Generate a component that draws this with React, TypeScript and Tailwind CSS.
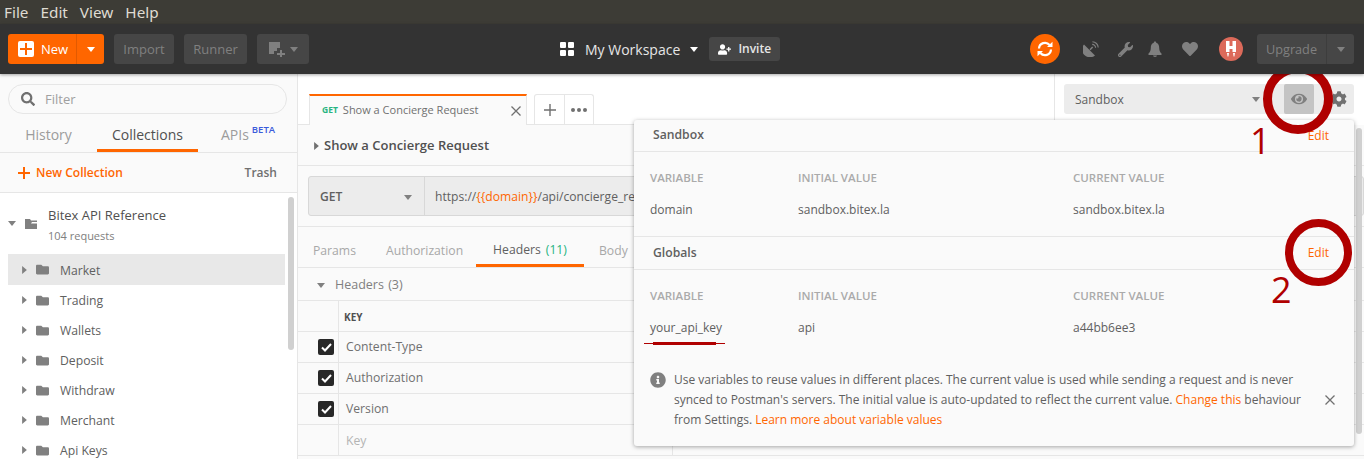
import { FaCog, FaEye, FaFolder, FaHeart, FaInfoCircle, FaSearch, FaUserPlus, FaWrench } from 'react-icons/fa';

const folders = ['Market', 'Trading', 'Wallets', 'Deposit', 'Withdraw', 'Merchant', 'Api Keys'];
const headerRows = ['Content-Type', 'Authorization', 'Version'];

function Caret({ dir = 'down', className = '' }: { dir?: 'down' | 'right'; className?: string }) {
  return (
    <svg width={dir === 'down' ? 10 : 6} height={dir === 'down' ? 6 : 10} viewBox={dir === 'down' ? '0 0 10 6' : '0 0 6 10'} className={`fill-current shrink-0 ${className}`}>
      <path d={dir === 'down' ? 'M0 0h10L5 6z' : 'M0 0l6 5-6 5z'} />
    </svg>
  );
}

function Cross({ className = '' }: { className?: string }) {
  return (
    <svg width="10" height="10" viewBox="0 0 10 10" className={`stroke-current shrink-0 ${className}`} strokeWidth="1.3">
      <path d="M0.5 0.5l9 9M9.5 0.5l-9 9" />
    </svg>
  );
}

function SyncIcon() {
  return (
    <svg width="18" height="18" viewBox="0 0 18 18" fill="none" stroke="white" strokeWidth="2.2">
      <path d="M3 8.5A6 6 0 0 1 13.6 5" />
      <path d="M15 9.5A6 6 0 0 1 4.4 13" />
      <path d="M11 7h5.5V1.8z" fill="white" stroke="none" />
      <path d="M7 11H1.5v5.2z" fill="white" stroke="none" />
    </svg>
  );
}

function DishIcon() {
  return (
    <svg width="16" height="16" viewBox="0 0 16 16" className="fill-current">
      <path d="M1 3.4A7.8 7.8 0 0 0 12 14.4z" />
      <path d="M6.5 8.2L9.2 5.5l1 1L7.5 9.2z" />
      <path d="M9.2 3.4a3.4 3.4 0 0 1 3.4 3.4" fill="none" stroke="currentColor" strokeWidth="1.1" />
      <path d="M9.4 0.8a5.8 5.8 0 0 1 5.8 5.8" fill="none" stroke="currentColor" strokeWidth="1.1" />
    </svg>
  );
}

function BellIcon({ className = '' }: { className?: string }) {
  return (
    <svg width="16" height="16" viewBox="0 0 16 16" className={`fill-current ${className}`}>
      <path d="M8 0.5c.8 0 1.2.6 1.2 1.2C11.5 2.5 12.2 4.5 12.2 7c0 3 1.2 4.5 2.3 5.5V14h-13v-1.5C2.6 11.5 3.8 10 3.8 7c0-2.5.7-4.5 3-5.3C6.8 1.1 7.2.5 8 .5z" />
      <path d="M6 14.6h4a2 1.4 0 0 1-4 0z" />
    </svg>
  );
}

function GrayButton({ children, className = '' }: { children: React.ReactNode; className?: string }) {
  return <div className={`h-[30px] pt-px flex items-center justify-center rounded-[3px] bg-[#464646] text-[#808080] text-[13px] ${className}`}>{children}</div>;
}

function Header() {
  return (
    <div className="relative z-10 h-[50px] shrink-0 flex items-center pl-2 pr-[10px] bg-[#333333] shadow-[0_1px_3px_rgba(0,0,0,0.35)]">
      <div className="w-[552px] shrink-0 flex items-center gap-[10px]">
        <div className="w-[96px] h-[30px] flex rounded-[3px] bg-[#ff6600] text-white text-[13px]">
          <div className="w-[69px] flex items-center pl-[10px] gap-[7px] border-r border-[#e25a00]">
            <div className="w-4 h-4 rounded-[2px] bg-white flex items-center justify-center">
              <svg width="12" height="12" viewBox="0 0 12 12" className="fill-[#ff6600]"><path d="M5 0h2v5h5v2H7v5H5V7H0V5h5z" /></svg>
            </div>
            <span className="pt-px">New</span>
          </div>
          <div className="flex-1 flex items-center justify-center"><Caret className="w-2 h-[5px]" /></div>
        </div>
        <GrayButton className="w-[60px]">Import</GrayButton>
        <GrayButton className="w-[63px]">Runner</GrayButton>
        <GrayButton className="w-[52px] gap-[5px]">
          <svg width="16" height="15" viewBox="0 0 16 15" className="fill-[#808080]"><path d="M0 0h11v6H8v3H5v3H0z" /><path d="M11 8h2v3h3v2h-3v2h-2v-2H8v-2h3z" /></svg>
          <Caret className="w-2 h-[5px]" />
        </GrayButton>
      </div>
      <div className="flex items-center text-[#e6e6e6]">
        <div className="grid grid-cols-2 gap-[2px] w-[14px] h-[14px]">
          <span className="bg-white rounded-[1px]" />
          <span className="bg-white rounded-[1px]" />
          <span className="bg-white rounded-[1px]" />
          <span className="bg-white rounded-[1px]" />
        </div>
        <span className="ml-[11px] text-[14px]">My Workspace</span>
        <Caret className="ml-[10px] w-2 h-[5px] text-white" />
        <div className="ml-[11px] w-[71px] h-6 flex items-center justify-center gap-[7px] rounded-[3px] bg-[#464646] text-[12px] font-semibold text-[#e6e6e6]">
          <FaUserPlus size={13} className="text-white" />
          <span>Invite</span>
        </div>
      </div>
      <div className="ml-auto flex items-center">
        <div className="w-[30px] h-[30px] rounded-full bg-[#ff6600] flex items-center justify-center">
          <SyncIcon />
        </div>
        <div className="ml-[23px] flex items-center text-[#808080]">
          <DishIcon />
          <FaWrench size={15} className="ml-[19px]" />
          <BellIcon className="ml-[14px]" />
          <FaHeart size={16} className="ml-[19px]" />
        </div>
        <div className="ml-[21px] w-6 h-6 rounded-full bg-[#dc6a5a] flex items-center justify-center">
          <svg width="12" height="16" viewBox="0 0 12 16" className="fill-white">
            <path d="M1 0h3.5v5h3V0H11v11H7.5V8h-3v3H1z" />
            <path d="M2 12h2l-.6 3.5h-.8zM8 12h2l-.6 3.5h-.8z" />
          </svg>
        </div>
        <div className="ml-[14px] w-[97px] h-[30px] flex rounded-[3px] bg-[#464646] text-[#808080] text-[12.7px]">
          <div className="w-[70px] pt-px flex items-center justify-center border-r border-[#3d3d3d]">Upgrade</div>
          <div className="flex-1 flex items-center justify-center"><Caret className="w-2 h-[5px]" /></div>
        </div>
      </div>
    </div>
  );
}

function Sidebar() {
  return (
    <div className="relative w-[298px] shrink-0 flex flex-col bg-white border-r border-[#e6e6e6]">
      <div className="shrink-0 bg-[#fafafa]">
        <div className="pt-[10px] px-2">
          <div className="w-[279px] h-[30px] flex items-center pl-3 gap-[10px] rounded-full border border-[#e6e6e6] bg-[#fafafa] text-[13px] text-[#a0a0a0]">
            <FaSearch size={14} className="text-[#707070]" />
            <span className="pt-px">Filter</span>
          </div>
        </div>
        <div className="h-[39px] flex text-[14px] text-[#9c9c9c] border-b border-[#e6e6e6]">
          <div className="w-[97px] pt-[3px] flex items-center justify-center">History</div>
          <div className="w-[101px] flex items-center justify-center text-[#505050] border-b-[3px] border-[#ff6600] pt-[6px]">Collections</div>
          <div className="flex-1 pt-[3px] flex items-center pl-[23px]">
            APIs
            <span className="self-start mt-[6px] ml-[3px] text-[9.5px] font-semibold text-[#3b5bdb]">BETA</span>
          </div>
        </div>
        <div className="h-[40px] flex items-center pl-[18px] pr-5 justify-between border-b border-[#e6e6e6] text-[12px]">
          <div className="flex items-center gap-[6px] font-semibold text-[#ff6600]">
            <svg width="12" height="12" viewBox="0 0 12 12" className="fill-[#ff6600]"><path d="M5 0h2v5h5v2H7v5H5V7H0V5h5z" /></svg>
            New Collection
          </div>
          <span className="text-[#707070] font-semibold">Trash</span>
        </div>
      </div>
      <div className="h-[61px] shrink-0 flex items-center pl-2 text-[#808080]">
        <Caret className="w-2 h-[5px]" />
        <svg width="12" height="10" viewBox="0 0 12 10" className="ml-[9px] fill-[#808080]"><path d="M0 0h5l1 1.5h6V3H7L6 4.5h6V10H0z" /></svg>
        <div className="ml-[11px] pt-[5px]">
          <div className="text-[13px] leading-[20px] text-[#505050]">Bitex API Reference</div>
          <div className="text-[11px] leading-[22px] text-[#808080]">104 requests</div>
        </div>
      </div>
      {folders.map((name, i) => (
        <div key={name} className={`ml-2 w-[277px] shrink-0 flex items-center pl-[14px] text-[12.2px] text-[#606060] ${i === 0 ? 'h-[31px] bg-[#e8e8e8]' : 'h-[30px]'}`}>
          <Caret dir="right" className="w-[5px] h-2 text-[#808080]" />
          <FaFolder size={13} className="ml-[9px] text-[#808080]" />
          <span className={`ml-[11px] ${i === 0 ? 'pt-[3px]' : 'pt-[2px]'}`}>{name}</span>
        </div>
      ))}
      <div className="absolute left-[288px] top-[123px] w-[6px] h-[153px] rounded-full bg-[#d0d0d0]" />
    </div>
  );
}

function RequestTabs() {
  return (
    <div className="h-[51px] shrink-0 flex bg-white">
      <div className="flex-1 flex items-end pl-[11px] border-b border-[#e6e6e6]">
        <div className="relative top-px w-[218px] h-[31px] flex items-center pl-3 pr-[5px] bg-[#fafafa] border-t-2 border-x border-t-[#ff6600] border-x-[#e6e6e6] text-[11px] text-[#707070]">
          <span className="font-bold text-[8.5px] text-[#26b47f]">GET</span>
          <span className="ml-[5px]">Show a Concierge Request</span>
          <Cross className="ml-auto text-[#707070]" />
        </div>
        <div className="ml-[7px] h-[30px] flex border border-b-0 border-[#e6e6e6] rounded-t-[3px] text-[#707070]">
          <div className="w-[30px] flex items-center justify-center border-r border-[#e6e6e6]">
            <svg width="12" height="12" viewBox="0 0 12 12" className="fill-[#707070]"><path d="M5.3 0h1.4v5.3H12v1.4H6.7V12H5.3V6.7H0V5.3h5.3z" /></svg>
          </div>
          <div className="w-[28px] flex items-center justify-center">
            <svg width="16" height="4" viewBox="0 0 16 4" className="fill-[#707070]"><circle cx="2" cy="2" r="2" /><circle cx="8" cy="2" r="2" /><circle cx="14" cy="2" r="2" /></svg>
          </div>
        </div>
      </div>
      <div className="w-[310px] shrink-0 flex items-start pt-[10px] pl-[9px] border-l border-[#e6e6e6]">
        <div className="w-[290px] h-[30px] flex items-center rounded-[3px] bg-[#ececec]">
          <div className="w-[200px] flex items-center pl-[11px] pr-[4px] text-[12px] font-medium text-[#606060]">
            <span className="pt-[2px]">Sandbox</span>
            <Caret className="ml-auto w-2 h-[5px] text-[#808080]" />
          </div>
          <div className="ml-5 w-[30px] h-[30px] rounded-[2px] bg-[#c4c4c4] flex items-center justify-center text-[#808080]">
            <FaEye size={16} />
          </div>
          <FaCog size={16} className="ml-[17px] text-[#707070]" />
        </div>
      </div>
    </div>
  );
}

function HeadersTable() {
  return (
    <div className="shrink-0 text-[12.2px]">
      <div className="h-[33px] pt-[2px] flex items-center pl-[19px] border-b border-[#e6e6e6] text-[12.5px] text-[#808080]">
        <Caret className="w-2 h-[5px]" />
        <span className="ml-[10px]">Headers <span className="ml-px">(3)</span></span>
      </div>
      <div className="flex h-[31px] border-b border-[#e6e6e6]">
        <div className="w-[41px] border-r border-[#e6e6e6]" />
        <div className="w-[334px] pt-[2px] border-r border-[#e6e6e6] flex items-center pl-[5px] text-[10px] font-bold text-[#505050]">KEY</div>
      </div>
      {headerRows.map(key => (
        <div key={key} className="flex h-[31px] border-b border-[#e6e6e6]">
          <div className="w-[41px] border-r border-[#e6e6e6] flex items-center pl-5">
            <div className="w-4 h-4 shrink-0 rounded-[2px] bg-[#282828] flex items-center justify-center">
              <svg width="11" height="9" viewBox="0 0 11 9" fill="none" stroke="white" strokeWidth="2"><path d="M1 4.5l3 3 6-6.5" /></svg>
            </div>
          </div>
          <div className="w-[334px] pt-px border-r border-[#e6e6e6] flex items-center pl-[7px] text-[#707070]">{key}</div>
        </div>
      ))}
      <div className="flex h-[31px] border-b border-[#e6e6e6]">
        <div className="w-[41px] border-r border-[#e6e6e6]" />
        <div className="w-[334px] pt-[2px] border-r border-[#e6e6e6] flex items-center pl-[7px] text-[#b4b4b4]">Key</div>
      </div>
    </div>
  );
}

function RequestPane() {
  return (
    <div className="flex-1 flex flex-col bg-[#fafafa]">
      <div className="h-[41px] pt-px shrink-0 flex items-center pl-4 border-b border-[#e6e6e6] text-[13px] font-semibold text-[#505050]">
        <Caret dir="right" className="w-[5px] h-2 text-[#707070]" />
        <span className="ml-[5px]">Show a Concierge Request</span>
      </div>
      <div className="h-[61px] shrink-0 pt-[10px] pl-[10px] border-b border-[#e6e6e6]">
        <div className="h-10 flex border border-[#d8d8d8] rounded-[3px] bg-[#ececec] text-[12.1px] text-[#606060]">
          <div className="w-[116px] pt-[2px] flex items-center pl-[11px] pr-[12px] border-r border-[#d8d8d8] font-semibold">
            GET
            <Caret className="ml-auto w-2 h-[5px] text-[#808080]" />
          </div>
          <div className="w-[209px] pt-[2px] overflow-hidden whitespace-nowrap flex items-center pl-[10px]">
            https://<span className="text-[#ff6600]">{'{{domain}}'}</span>/api/concierge_requests
          </div>
        </div>
      </div>
      <div className="h-[41px] shrink-0 flex pl-[15px] border-b border-[#e6e6e6] text-[12.2px] text-[#a8a8a8]">
        <div className="w-[73px] pt-[8px] flex items-center">Params</div>
        <div className="w-[90px] pt-[8px] flex items-center">Authorization</div>
        <div className="w-[108px] flex items-center justify-center text-[#606060] border-b-[3px] border-[#ff6600] pt-[9px]">
          Headers <span className="ml-[5px] text-[#26b47f]">(11)</span>
        </div>
        <div className="ml-[15px] pt-[8px] flex items-center">Body</div>
      </div>
      <HeadersTable />
    </div>
  );
}

function VarRow({ name, initial, current }: { name: string; initial: string; current: string }) {
  return (
    <>
      <div className="h-[45px] flex items-end pb-[11px] pl-4 text-[11.5px] font-semibold text-[#aaaaaa]">
        <span className="w-[148px]">VARIABLE</span>
        <span className="w-[275px]">INITIAL VALUE</span>
        <span>CURRENT VALUE</span>
      </div>
      <div className="h-[39px] flex items-start pt-[4px] pl-4 text-[12px] text-[#606060]">
        <span className="w-[148px]">{name}</span>
        <span className="w-[275px]">{initial}</span>
        <span>{current}</span>
      </div>
    </>
  );
}

function VariablesPopover() {
  return (
    <div className="absolute left-[634px] top-[120px] w-[720px] h-[326px] rounded-[3px] bg-[#fafafa] shadow-[0_1px_4px_rgba(0,0,0,0.35)]">
      <div className="h-[32px] flex items-center justify-between pl-[19px] pr-[25px] border-b border-[#e6e6e6]">
        <span className="text-[12.2px] font-semibold text-[#606060]">Sandbox</span>
        <span className="text-[12px] text-[#ff6600]">Edit</span>
      </div>
      <VarRow name="domain" initial="sandbox.bitex.la" current="sandbox.bitex.la" />
      <div className="h-[34px] flex items-center justify-between pl-[19px] pr-[25px] border-y border-[#e6e6e6]">
        <span className="text-[12.2px] font-semibold text-[#606060]">Globals</span>
        <span className="text-[12px] text-[#ff6600]">Edit</span>
      </div>
      <VarRow name="your_api_key" initial="api" current="a44bb6ee3" />
      <div className="mt-[16px] flex pl-4 pr-[19px] items-center">
        <FaInfoCircle size={16} className="self-start mt-[2px] shrink-0 text-[#808080]" />
        <p className="ml-[8px] w-[640px] text-[12px] leading-[20px] text-[#606060]">
          Use variables to reuse values in different places. The current value is used while sending a request and is never synced to Postman's servers. The initial value is auto-updated to reflect the current value. <span className="text-[#ff6600]">Change this</span> behaviour from Settings. <span className="text-[#ff6600]">Learn more about variable values</span>
        </p>
        <Cross className="ml-auto text-[#707070]" />
      </div>
    </div>
  );
}

function Annotations() {
  return (
    <>
      <div className="absolute left-[1263px] top-[64px] w-[70px] h-[70px] rounded-full border-[9px] border-[#b00000]" />
      <div className="absolute left-[1285px] top-[219px] w-[67px] h-[67px] rounded-full border-[8px] border-[#b00000]" />
      <span className="absolute left-[1250px] top-[119px] text-[36px] leading-[44px] text-[#b00000]">1</span>
      <span className="absolute left-[1271px] top-[268px] text-[36px] leading-[44px] text-[#b00000]">2</span>
      <div className="absolute left-[644px] top-[343px] w-[81px] h-px bg-[#b00000]" />
      <div className="absolute left-[653px] top-[342px] w-[63px] h-[3px] bg-[#b00000]" />
    </>
  );
}

export default function App() {
  return (
    <div className="relative w-[1364px] h-[459px] overflow-hidden flex flex-col bg-white font-['Open_Sans',sans-serif]">
      <div className="h-6 shrink-0 flex items-center pl-1 gap-3 bg-[#3d3c36] text-[15.3px] text-[#dfdbd2] font-['Noto_Sans',sans-serif]">
        <span>File</span>
        <span>Edit</span>
        <span>View</span>
        <span>Help</span>
      </div>
      <Header />
      <div className="flex-1 flex min-h-0">
        <Sidebar />
        <div className="flex-1 flex flex-col min-w-0">
          <RequestTabs />
          <RequestPane />
        </div>
      </div>
      <div className="absolute left-[1356px] top-[128px] w-[6px] h-[306px] rounded-full bg-[#d0d0d0]" />
      <VariablesPopover />
      <Annotations />
    </div>
  );
}
